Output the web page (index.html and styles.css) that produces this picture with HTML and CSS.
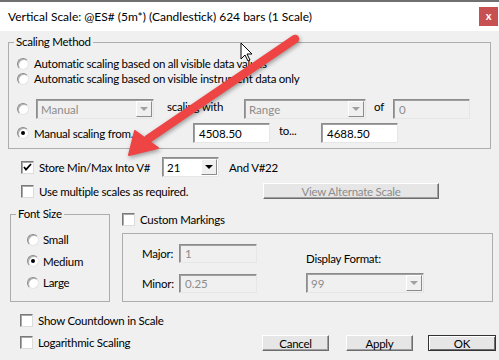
FILE: index.html
```html
<!DOCTYPE html>
<html lang="en">
<head>
  <meta charset="UTF-8">
  <title>Vertical Scale</title>
  <link rel="stylesheet" href="styles.css">
</head>
<body>
  <div class="dialog">
    <div class="titlebar">
      <span class="title">Vertical Scale: @ES# (5m*) (Candlestick) 624 bars (1 Scale)</span>
      <span class="close">x</span>
    </div>

    <div class="content">
      <fieldset class="group scaling">
        <legend>Scaling Method</legend>
        <div class="inner">
          <div class="row r1"><span class="radio"></span>Automatic scaling based on all visible data values</div>
          <div class="row r2"><span class="radio"></span>Automatic scaling based on visible instrument data only</div>
          <div class="row r3">
            <span class="radio"></span>
            <span class="combo disabled manual"><span class="val">Manual</span><span class="drop"><i></i></span></span>
            <span class="lbl with">scaling with</span>
            <span class="combo disabled range"><span class="val">Range</span><span class="drop"><i></i></span></span>
            <span class="lbl of">of</span>
            <span class="edit disabled num">0</span>
          </div>
          <div class="row r4">
            <span class="radio checked"></span>
            <span class="from">Manual scaling from...</span>
            <span class="edit num">4508.50</span>
            <span class="lbl to">to...</span>
            <span class="edit num">4688.50</span>
          </div>
        </div>
      </fieldset>

      <div class="row store">
        <span class="check checked"><svg width="11" height="11" viewBox="0 0 11 11"><path d="M2 5 L4 7.5 L9 2" fill="none" stroke="#000" stroke-width="1.8"/></svg></span>
        <span class="store-lbl">Store Min/Max Into V#</span>
        <span class="combo v21"><span class="val">21</span><span class="drop"><i></i></span></span>
        <span class="and">And V#22</span>
      </div>

      <div class="row multi">
        <span class="check"></span>
        <span class="multi-lbl">Use multiple scales as required.</span>
        <span class="btn disabled alt">View Alternate Scale</span>
      </div>

      <div class="lower">
        <fieldset class="group fontsize">
          <legend>Font Size</legend>
          <div class="inner">
            <div class="row"><span class="radio"></span>Small</div>
            <div class="row"><span class="radio checked"></span>Medium</div>
            <div class="row"><span class="radio"></span>Large</div>
          </div>
        </fieldset>

        <div class="markings">
          <div class="row custom"><span class="check"></span>Custom Markings</div>
          <div class="mbox">
            <div class="mcol">
              <div class="mrow"><span class="mlbl">Major:</span><span class="edit disabled mnum">1</span></div>
              <div class="mrow"><span class="mlbl">Minor:</span><span class="edit disabled mnum">0.25</span></div>
            </div>
            <div class="fcol">
              <div class="flbl">Display Format:</div>
              <span class="combo disabled fmt"><span class="val">99</span><span class="drop"><i></i></span></span>
            </div>
          </div>
        </div>
      </div>

      <div class="bottom">
        <div class="opts">
          <div class="row"><span class="check"></span>Show Countdown in Scale</div>
          <div class="row"><span class="check"></span>Logarithmic Scaling</div>
        </div>
        <div class="buttons">
          <span class="btn">Cancel</span>
          <span class="btn apply">Apply</span>
          <span class="btn ok">OK</span>
        </div>
      </div>
    </div>

    <!-- annotation drawn over the dialog -->
    <svg class="overlay" width="499" height="360" viewBox="0 0 499 360">
      <g class="arrow">
        <line x1="295" y1="39" x2="148" y2="139" stroke="#ee4444" stroke-width="8.5" stroke-linecap="round"/>
        <polygon points="129,155 135,131 158,148" fill="#ee4444" stroke="#ee4444" stroke-width="2" stroke-linejoin="round"/>
      </g>
      <polygon class="cursor" points="241,43 241,59 245,55 248,61 250,60 247,54 252,54" fill="#fff" stroke="#000" stroke-width="1" stroke-linejoin="round"/>
    </svg>
  </div>
</body>
</html>
```

FILE: styles.css
```css
body {
  margin: 0;
  background-color: #f0f0f0;
  font-family: Lato, "Liberation Sans", sans-serif;
  font-size: 11.5px;
  letter-spacing: -0.25px;
  color: #000;
}

.dialog {
  position: relative;
  width: 499px;
  height: 360px;
  overflow: hidden;
  background-color: #f0f0f0;
}

/* title bar */
.titlebar {
  height: 29px;
  border-top: 2px solid #707070;
  background-color: #ffffff;
  display: flex;
  align-items: center;
  padding-left: 8px;
}

.title {
  font-size: 12px;
  letter-spacing: 0;
  flex: 1;
}

.close {
  width: 19px;
  height: 19px;
  margin-right: 1px;
  background-color: #c75050;
  color: #ffffff;
  font-weight: bold;
  font-size: 11px;
  line-height: 17px;
  text-align: center;
  letter-spacing: 0;
}

.content {
  padding-top: 4px;
}

/* group boxes */
.group {
  border: 1px solid #adadad;
  padding: 0;
  min-width: 0;
}

.group legend {
  margin-left: 5px;
  padding: 0 2px;
  line-height: 14px;
}

.row {
  display: flex;
  align-items: center;
  white-space: nowrap;
}

.scaling {
  margin: 0 8px 0 8px;
}

.scaling .inner {
  padding: 7px 0 5px 8px;
}

.scaling .r1,
.scaling .r2 {
  height: 15px;
}

.scaling .r3 {
  height: 20px;
  margin-top: 13px;
}

.scaling .r4 {
  height: 20px;
  margin-top: 4px;
}

.lbl {
  align-self: flex-start;
  line-height: 15px;
}

.with {
  margin-left: 13px;
  width: 77px;
}

.of {
  margin-left: 8px;
  width: 19px;
}

.from {
  width: 159px;
}

.to {
  margin-left: 9px;
  width: 42px;
}

/* radio + checkbox */
.radio {
  box-sizing: border-box;
  width: 12px;
  height: 12px;
  border-radius: 50%;
  border: 1px solid;
  border-color: #8a8a8a #e4e4e4 #e4e4e4 #8a8a8a;
  box-shadow: inset 1px 1px 0 #b0b0b0;
  background-color: #ffffff;
  margin-right: 5px;
  position: relative;
  flex: none;
}

.radio.checked::after {
  content: "";
  position: absolute;
  left: 3px;
  top: 3px;
  width: 4px;
  height: 4px;
  border-radius: 50%;
  background-color: #000;
}

.check {
  box-sizing: border-box;
  width: 13px;
  height: 13px;
  border: 1px solid;
  border-color: #7a7a7a #dcdcdc #dcdcdc #7a7a7a;
  box-shadow: inset 1px 1px 0 #a8a8a8;
  background-color: #ffffff;
  margin-right: 5px;
  flex: none;
  display: flex;
  align-items: center;
  justify-content: center;
}

/* edit boxes and combos */
.edit,
.combo {
  box-sizing: border-box;
  height: 20px;
  border: 1px solid;
  border-color: #8c8c8c #e6e6e6 #e6e6e6 #8c8c8c;
  box-shadow: inset 1px 1px 0 #a0a0a0;
  background-color: #ffffff;
  display: flex;
  align-items: center;
  padding-left: 5px;
  flex: none;
  letter-spacing: 0;
}

.edit.disabled,
.combo.disabled {
  background-color: #f0f0f0;
  color: #8c8c8c;
}

.combo {
  padding-left: 4px;
  padding-right: 1px;
}

.combo .val {
  flex: 1;
}

.combo .drop {
  box-sizing: border-box;
  width: 16px;
  height: 16px;
  border: 1px solid;
  border-color: #ffffff #8c8c8c #8c8c8c #ffffff;
  background-color: #f0f0f0;
  display: flex;
  align-items: center;
  justify-content: center;
}

.combo .drop i {
  width: 0;
  height: 0;
  border-left: 4px solid transparent;
  border-right: 4px solid transparent;
  border-top: 4px solid #000;
}

.combo.disabled .drop i {
  border-top-color: #a0a0a0;
}

.manual {
  width: 118px;
  margin-left: 2px;
}

.range {
  width: 122px;
}

.num {
  width: 77px;
}

/* store row */
.store {
  height: 20px;
  margin-top: 8px;
  padding-left: 21px;
}

.store-lbl {
  width: 123px;
}

.v21 {
  width: 57px;
}

.and {
  margin-left: 10px;
}

.multi {
  height: 16px;
  margin-top: 6px;
  padding-left: 21px;
}

.multi-lbl {
  width: 224px;
}

/* buttons */
.btn {
  box-sizing: border-box;
  height: 16px;
  display: flex;
  align-items: center;
  justify-content: center;
  background-color: #e6e6e6;
  border: 1px solid;
  border-color: #ffffff #6d6d6d #6d6d6d #ffffff;
  box-shadow: inset -1px -1px 0 #a0a0a0;
  flex: none;
}

.btn.disabled {
  color: #8c8c8c;
}

.alt {
  width: 176px;
}

/* lower section */
.lower {
  display: flex;
  margin-top: 8px;
}

.fontsize {
  margin: 0 0 0 10px;
  width: 100px;
  box-sizing: border-box;
}

.fontsize .inner {
  padding: 11px 0 9px 16px;
  display: flex;
  flex-direction: column;
  gap: 6.5px;
}

.fontsize .row {
  height: 15px;
}

.fontsize .radio {
  margin-right: 4px;
}

.markings {
  margin-left: 12px;
  width: 371px;
}

.custom {
  height: 16px;
  margin-top: 4px;
}

.mbox {
  margin-top: 6px;
  border: 1px solid #adadad;
  height: 69px;
  box-sizing: border-box;
  display: flex;
  padding: 10px 0 0 19px;
}

.mcol {
  display: flex;
  flex-direction: column;
  gap: 11px;
}

.mrow {
  display: flex;
  align-items: center;
  height: 19px;
}

.mlbl {
  width: 31px;
  margin-right: 6px;
  text-align: right;
}

.mnum {
  width: 78px;
  height: 19px;
}

.fcol {
  margin-left: 49px;
  display: flex;
  flex-direction: column;
}

.flbl {
  height: 19px;
  line-height: 15px;
  padding-top: 7px;
  box-sizing: border-box;
  margin-bottom: 10px;
}

.fmt {
  width: 118px;
}

/* bottom */
.bottom {
  display: flex;
  margin-top: 10px;
}

.opts {
  flex: 1;
  padding-left: 20px;
  display: flex;
  flex-direction: column;
  gap: 6px;
}

.opts .row {
  height: 16px;
}

.buttons {
  display: flex;
  align-self: flex-end;
  margin-bottom: -1px;
  margin-right: 3px;
}

.buttons .btn {
  width: 67px;
}

.buttons .apply {
  margin-left: 17px;
}

.buttons .ok {
  margin-left: 15px;
  width: 68px;
  border: 1px solid #333333;
  box-shadow: inset 1px 1px 0 #ffffff, inset -1px -1px 0 #6d6d6d;
}

/* annotation */
.overlay {
  position: absolute;
  left: 0;
  top: 0;
  pointer-events: none;
}

.arrow {
  filter: drop-shadow(1px 2px 2px rgba(0, 0, 0, 0.35));
}
```
